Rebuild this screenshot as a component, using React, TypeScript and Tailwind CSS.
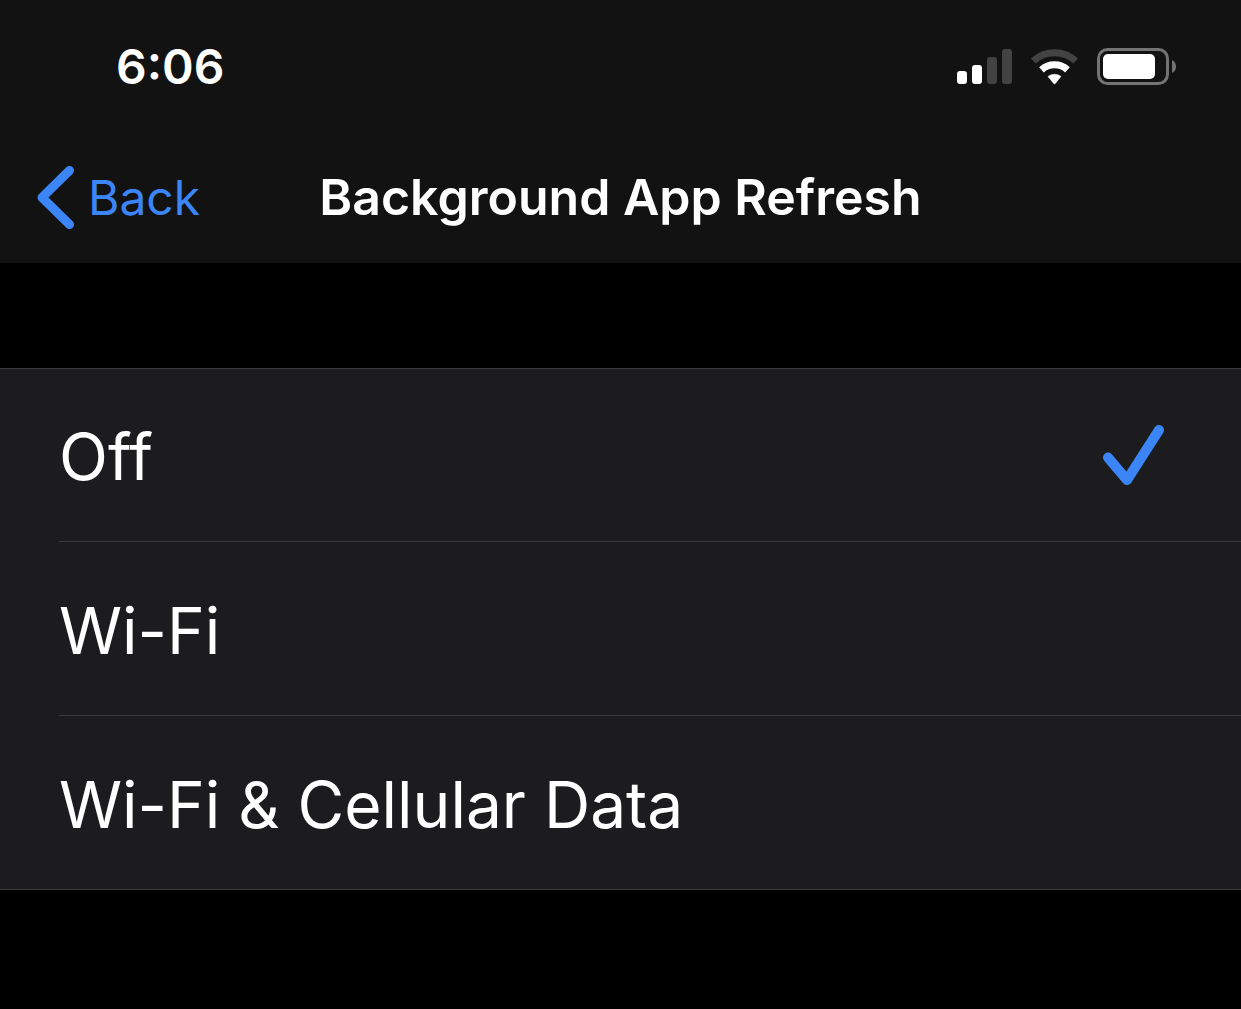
import { useState } from "react";

const options = ["Off", "Wi-Fi", "Wi-Fi & Cellular Data"];

function StatusIcons() {
  return (
    <div className="flex items-center gap-[18px]">
      <svg
        width="56"
        height="36"
        viewBox="0 0 56 36"
        role="img"
        aria-label="Cellular signal"
      >
        <rect x="0" y="22" width="10" height="13" rx="3" fill="#fff" />
        <rect x="15" y="16" width="10" height="19" rx="3" fill="#fff" />
        <rect x="30" y="8" width="10" height="27" rx="3" fill="#434343" />
        <rect x="45" y="0" width="10" height="35" rx="3" fill="#434343" />
      </svg>
      <svg
        width="48"
        height="36"
        viewBox="0 0 48 36"
        role="img"
        aria-label="Wi-Fi"
      >
        <path
          d="M2.300 12A31.500 31.500 0 0 1 44.700 12"
          fill="none"
          stroke="#434343"
          strokeWidth="7"
        />
        <path
          d="M10.500 20.800A19.500 19.500 0 0 1 36.500 20.800"
          fill="none"
          stroke="#fff"
          strokeWidth="7"
        />
        <path
          d="M17 27.400A11 11 0 0 1 30 27.400L24.300 34.500Q23.500 35.300 22.700 34.500Z"
          fill="#fff"
          stroke="#fff"
          strokeWidth="0.500"
          strokeLinejoin="round"
        />
      </svg>
      <svg
        width="80"
        height="38"
        viewBox="0 0 80 38"
        role="img"
        aria-label="Battery"
      >
        <rect
          x="1.5"
          y="1.5"
          width="69"
          height="34"
          rx="9"
          fill="none"
          stroke="#737373"
          strokeWidth="3"
        />
        <rect x="6" y="6" width="52" height="25" rx="5" fill="#fff" />
        <path d="M75 12q4 2 4 6.500t-4 6.500z" fill="#737373" />
      </svg>
    </div>
  );
}

export default function App() {
  const [selected, setSelected] = useState<string>("Off");

  return (
    <div className="min-h-screen bg-black font-[Inter,sans-serif] text-white">
      <header className="bg-[#121212]">
        <div className="flex h-[132px] items-center justify-between pt-0.5 pr-[64px] pl-[116px]">
          <time className="text-[48px] font-semibold">6:06</time>
          <StatusIcons />
        </div>

        <nav className="grid h-[131px] grid-cols-[1fr_auto_1fr] items-center">
          <button
            type="button"
            className="flex items-center gap-3.5 pl-9 text-[48px] text-[#3c85f6]"
          >
            <svg width="38" height="64" viewBox="0 0 38 64" aria-hidden="true">
              <path
                d="M33.500 4.500 6 31.500 33.500 58.500"
                fill="none"
                stroke="currentColor"
                strokeWidth="9"
                strokeLinecap="round"
                strokeLinejoin="round"
              />
            </svg>
            Back
          </button>
          <h1 className="text-[50px] font-semibold">Background App Refresh</h1>
        </nav>
      </header>

      <main className="pt-[105px]">
        <ul className="border-y border-[#3b3b3d] bg-[#1c1c1e]">
          {options.map((option, index) => (
            <li key={option} className="pl-[59px]">
              <button
                type="button"
                aria-pressed={selected === option}
                onClick={() => setSelected(option)}
                className={`flex w-full items-center justify-between pr-[76px] text-left text-[64px] ${
                  index > 0
                    ? "h-[174px] border-t border-[#3b3b3d]"
                    : "h-[172px]"
                }`}
              >
                <span className="pt-1">{option}</span>
                {selected === option && (
                  <svg
                    width="63"
                    height="62"
                    viewBox="0 0 63 62"
                    className="text-[#3c85f6]"
                    aria-hidden="true"
                  >
                    <path
                      d="M6 33.500 25 56 57 6"
                      fill="none"
                      stroke="currentColor"
                      strokeWidth="10"
                      strokeLinecap="round"
                      strokeLinejoin="round"
                    />
                  </svg>
                )}
              </button>
            </li>
          ))}
        </ul>
      </main>
    </div>
  );
}
